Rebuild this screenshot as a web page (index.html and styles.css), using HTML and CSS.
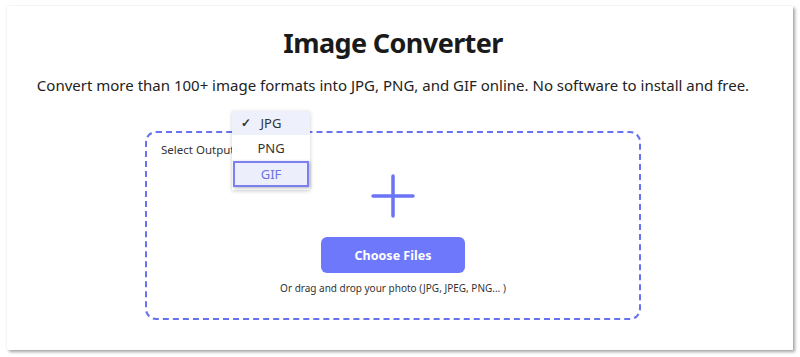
FILE: index.html
```html
<!DOCTYPE html>
<html lang="en">
<head>
    <meta charset="UTF-8">
    <meta name="viewport" content="width=device-width, initial-scale=1.0">
    <title>Image Converter</title>
    <link rel="stylesheet" href="styles.css">
</head>
<body>
    <div class="card">
        <h1>Image Converter</h1>
        <p class="subtitle">Convert more than 100+ image formats into JPG, PNG, and GIF online. No software to install and free.</p>

        <div class="drop-zone">
            <div class="format-label">Select Output Format</div>

            <ul class="format-menu">
                <li class="option checked"><span class="check">&#10003;</span>JPG</li>
                <li class="option">PNG</li>
                <li class="option focused">GIF</li>
            </ul>

            <svg class="plus" width="44" height="44" viewBox="0 0 44 44">
                <path d="M22 2 V42 M2 22 H42" stroke="#6b74f6" stroke-width="3.5" stroke-linecap="round" fill="none"/>
            </svg>
            <button class="btn">Choose Files</button>
            <p class="hint">Or drag and drop your photo (JPG, JPEG, PNG... )</p>
        </div>
    </div>
</body>
</html>
```

FILE: styles.css
```css
body {
    font-family: "Noto Sans", "Open Sans", sans-serif;
    background-color: #fff;
    margin: 0;
    padding: 6px 4px 7px 7px;
    color: #222;
}

.card {
    background-color: #fff;
    width: 786px;
    height: 344px;
    box-sizing: border-box;
    padding: 19px 14px 0 0;
    box-shadow: 2px 2px 3px rgba(0, 0, 0, 0.35), 0 0 2px rgba(0, 0, 0, 0.08);
    display: flex;
    flex-direction: column;
    align-items: center;
}

h1 {
    margin: 0;
    font-size: 27px;
    line-height: 36px;
    font-weight: 700;
    color: #1a1a1a;
    letter-spacing: -0.6px;
}

.subtitle {
    margin: 13px 0 0;
    font-size: 15px;
    line-height: 22px;
    color: #222;
}

.drop-zone {
    position: relative;
    margin-top: 35px;
    width: 496px;
    height: 189px;
    box-sizing: border-box;
    border: 2px dashed #6672ee;
    border-radius: 11px;
    display: flex;
    flex-direction: column;
    align-items: center;
}

.format-label {
    align-self: flex-start;
    margin: 9px 0 0 14px;
    font-size: 11.5px;
    line-height: 16px;
    color: #333;
    white-space: nowrap;
}

.format-menu {
    position: absolute;
    left: 85px;
    top: -22px;
    width: 78px;
    margin: 0;
    padding: 0 0 3px;
    list-style: none;
    background-color: #fff;
    box-shadow: 0 1px 4px rgba(0, 0, 0, 0.2);
    z-index: 1;
}

.option {
    height: 26px;
    line-height: 26px;
    font-size: 13px;
    color: #333;
    text-align: center;
    position: relative;
}

.option.checked {
    background-color: #eef0fc;
    height: 24px;
    line-height: 24px;
}

.check {
    position: absolute;
    left: 9px;
    font-size: 12px;
    font-weight: 700;
}

.option.focused {
    margin: 0 1px;
    height: 22px;
    line-height: 22px;
    border: 2px solid #7a80f2;
    background-color: #eceefc;
    color: #6b74e0;
    box-shadow: 1px 1px 3px rgba(0, 0, 0, 0.3);
}

.plus {
    margin-top: 16px;
}

.btn {
    margin-top: 19px;
    width: 144px;
    height: 36px;
    border: none;
    border-radius: 6px;
    background-color: #6e78fb;
    color: #fff;
    font-family: inherit;
    font-size: 12.5px;
    font-weight: 700;
    cursor: pointer;
}

.hint {
    margin: 7px 0 0;
    font-size: 10px;
    line-height: 16px;
    color: #333;
}
```
